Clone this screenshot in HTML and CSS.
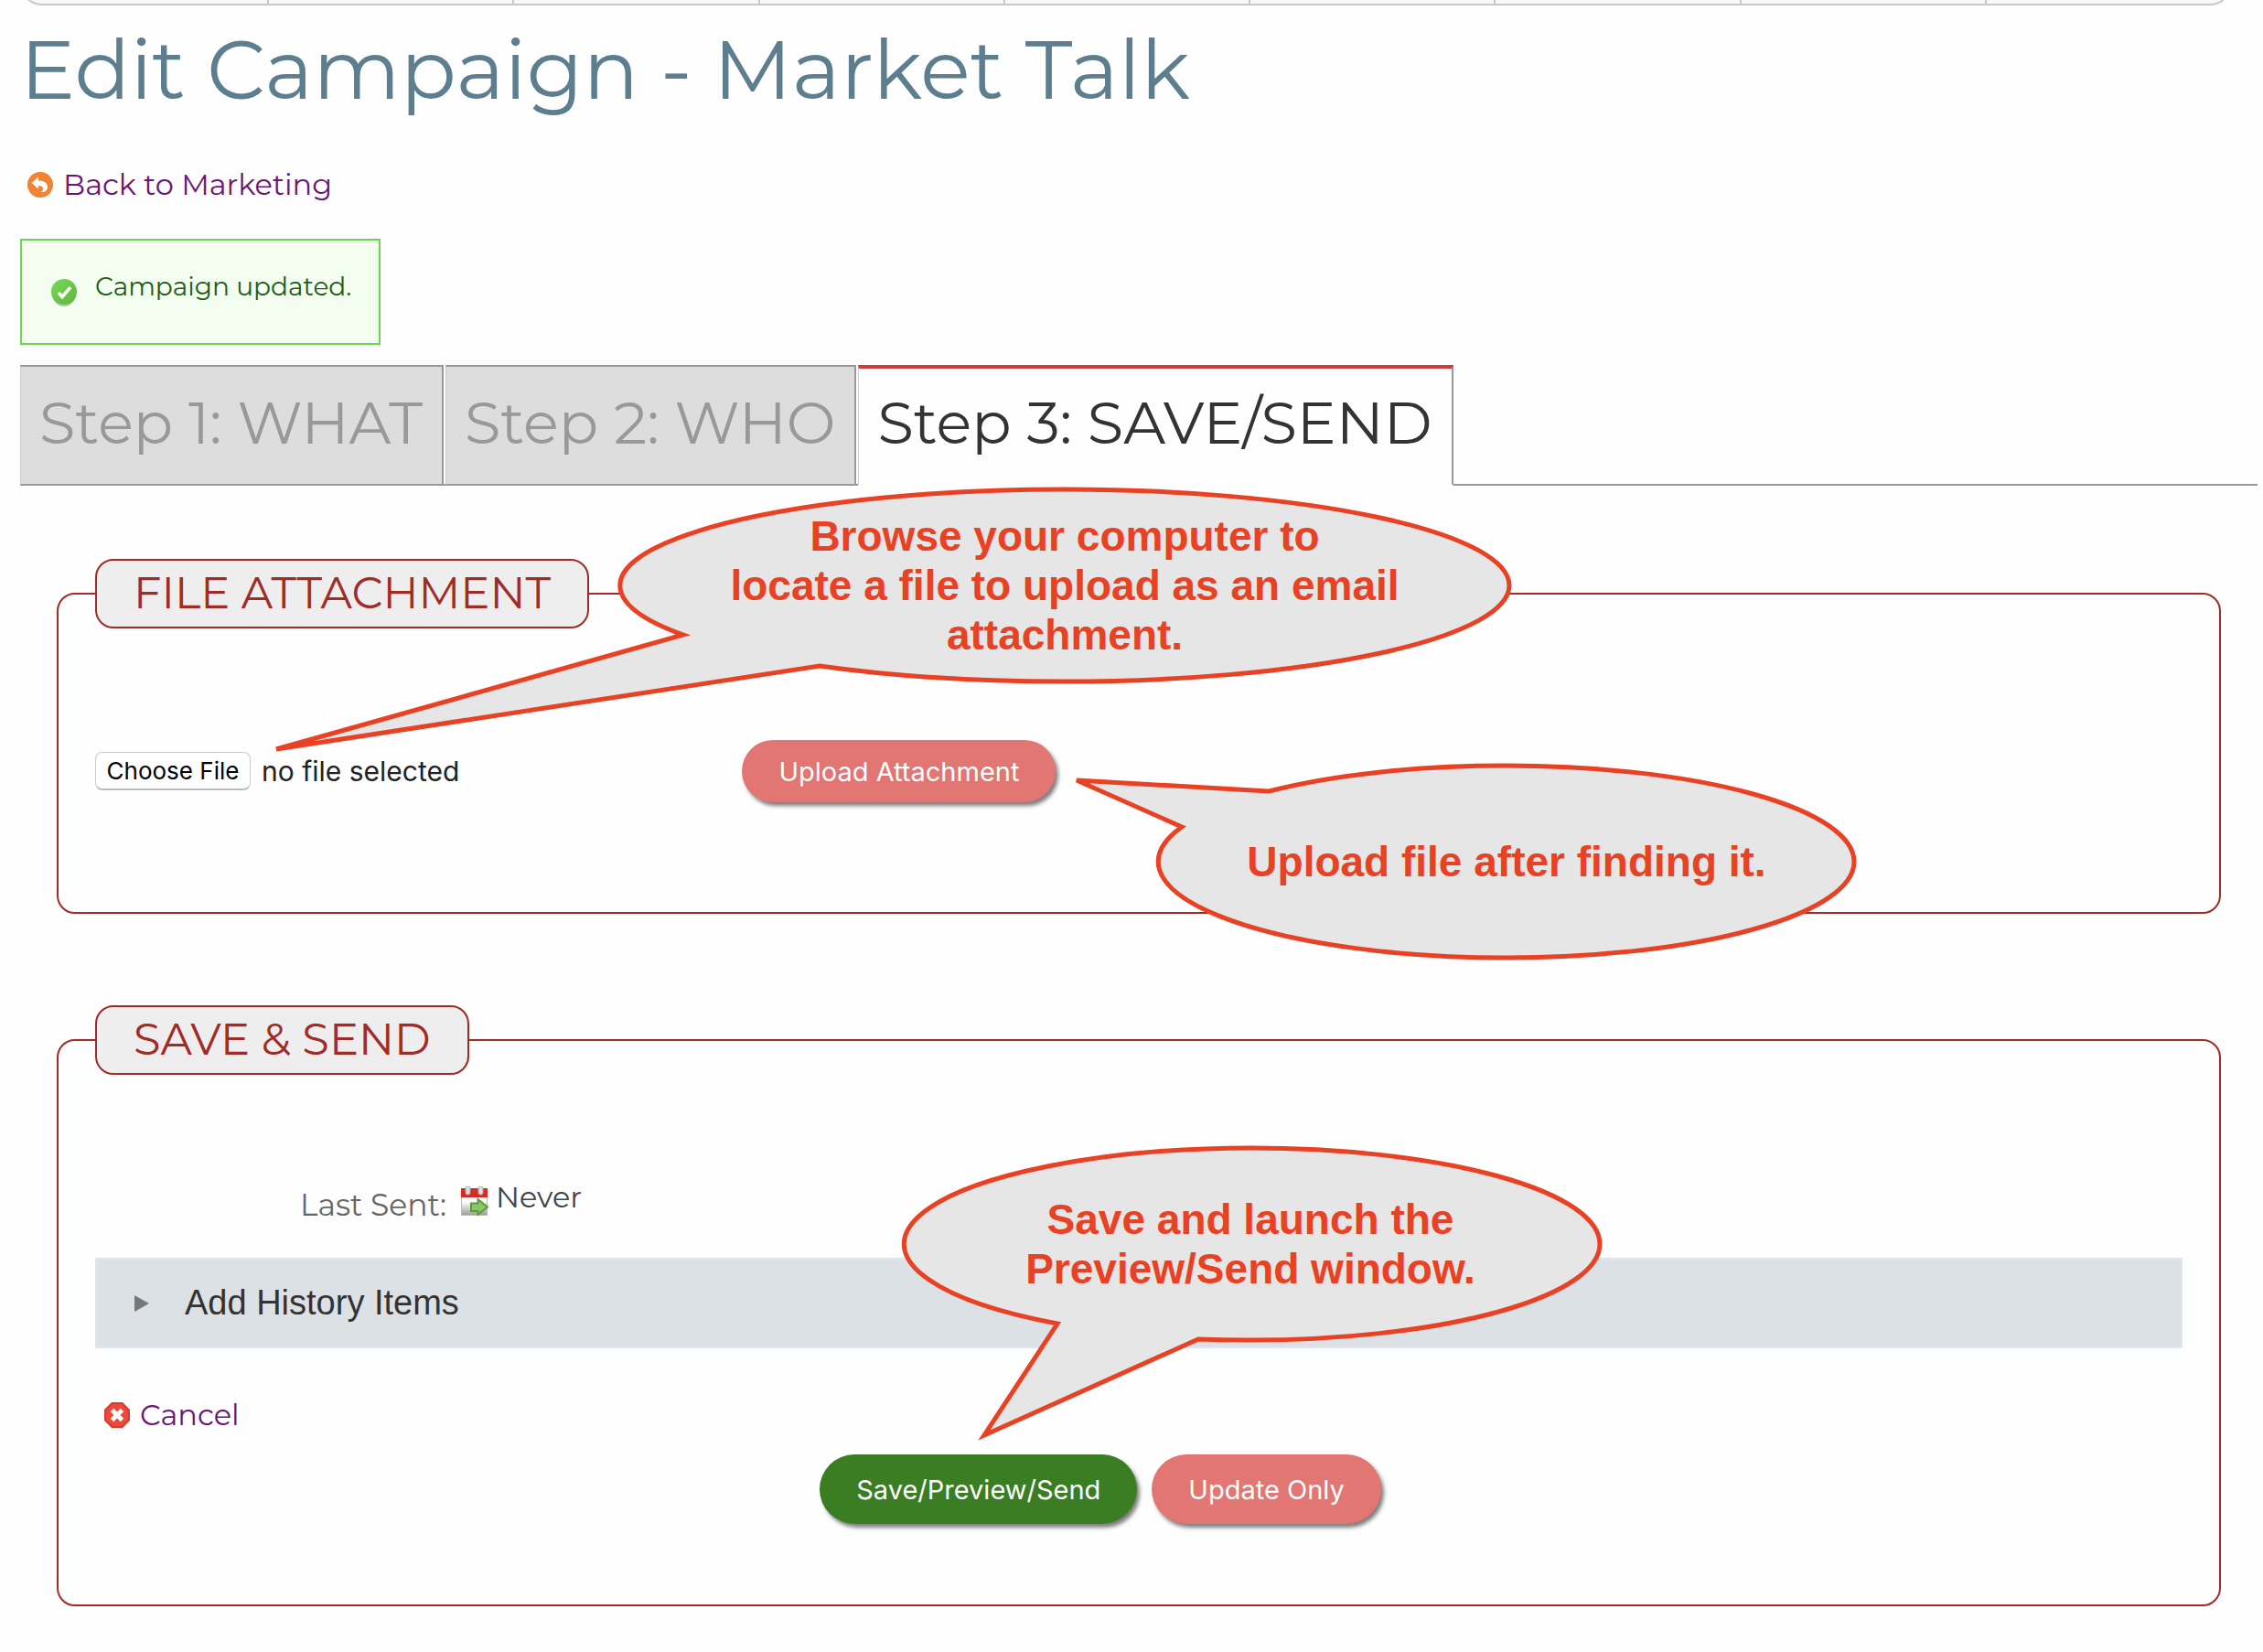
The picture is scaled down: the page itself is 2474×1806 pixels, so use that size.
FILE: index.html
```html
<!DOCTYPE html>
<html lang="en">
<head>
    <meta charset="utf-8">
    <title>Edit Campaign - Market Talk</title>
    <link rel="stylesheet" href="styles.css">
</head>
<body>
    <div class="page">
        <div class="top-nav">
            <div class="top-nav-items">
                <span></span><span></span><span></span><span></span><span></span><span></span><span></span><span></span><span></span>
            </div>
        </div>

        <h1>Edit Campaign - Market Talk</h1>

        <a class="icon-link back-link" href="#">
            <svg class="icon" viewBox="0 0 28 28" aria-hidden="true">
                <circle cx="14" cy="14" r="14" fill="#ee8434"/>
                <path d="M4.500 12 L12 5.500 V9.500 C18 9.500 22 12 22 16.500 C22 20 19 22.500 14.500 22 C18 20.500 18.500 15 12 15 V18.500 Z" fill="#fff"/>
            </svg>
            Back to Marketing
        </a>

        <div class="alert">
            <svg class="icon" viewBox="0 0 28 30" aria-hidden="true">
                <defs>
                    <linearGradient id="ok" x1="0" y1="0" x2="1" y2="1">
                        <stop offset="0" stop-color="#74dc56"/>
                        <stop offset="1" stop-color="#5fb53c"/>
                    </linearGradient>
                </defs>
                <ellipse cx="14" cy="16" rx="13" ry="14" fill="#8c9a86" opacity="0.6"/>
                <circle cx="14" cy="14" r="14" fill="url(#ok)"/>
                <path d="M8 15 L12 19.500 L21 9" fill="none" stroke="#fff" stroke-width="3.500"/>
            </svg>
            <span>Campaign updated.</span>
        </div>

        <div class="tabs">
            <a class="tab" href="#">Step 1: WHAT</a>
            <a class="tab" href="#">Step 2: WHO</a>
            <a class="tab active" href="#">Step 3: SAVE/SEND</a>
        </div>

        <form class="panel">
            <fieldset>
                <legend>FILE ATTACHMENT</legend>
                <div class="upload-row">
                    <div class="file-picker">
                        <input type="file" id="attachment">
                        <label for="attachment">no file selected</label>
                    </div>
                    <div>
                        <button type="button" class="btn btn-small">Upload Attachment</button>
                    </div>
                </div>
            </fieldset>

            <fieldset class="save-send">
                <legend>SAVE &amp; SEND</legend>
                <div class="last-sent">
                    <span class="field-label">Last Sent:</span>
                    <svg class="calendar" viewBox="0 0 30 32" aria-hidden="true">
                        <defs>
                            <linearGradient id="sheet" x1="0" y1="0" x2="0" y2="1">
                                <stop offset="0.500" stop-color="#fdfdfd"/>
                                <stop offset="1" stop-color="#9a9a9a"/>
                            </linearGradient>
                        </defs>
                        <rect x="0.500" y="3" width="28" height="28.500" fill="url(#sheet)" stroke="#bbb"/>
                        <rect x="0" y="2" width="29" height="10" fill="#d42b22"/>
                        <rect x="5" y="0" width="5" height="9" rx="2" fill="#ddd" stroke="#a9a9a9"/>
                        <rect x="19" y="0" width="5" height="9" rx="2" fill="#ddd" stroke="#a9a9a9"/>
                        <path d="M11 18.500 H18.500 V14 L29 22.500 L18.500 31 V27 H11 Z" fill="#8cc468" stroke="#5c9c3c" stroke-width="2"/>
                    </svg>
                    <span class="sent-value">Never</span>
                </div>

                <details class="history">
                    <summary>
                        <svg class="arrow" viewBox="0 0 16 18" aria-hidden="true"><path d="M0 0 L16 9 L0 18 Z" fill="#777"/></svg>
                        Add History Items
                    </summary>
                </details>

                <a class="icon-link cancel-link" href="#">
                    <svg class="icon" viewBox="0 0 28 28" aria-hidden="true">
                        <path d="M8 0 H20 L28 8 V20 L20 28 H8 L0 20 V8 Z" fill="#dc3a2c"/>
                        <path d="M9 2 H19 L26 9 V19 L19 26 H9 L2 19 V9 Z" fill="#ea4a3a"/>
                        <path d="M8.500 8.500 L19.500 19.500 M19.500 8.500 L8.500 19.500" stroke="#fff" stroke-width="5"/>
                    </svg>
                    Cancel
                </a>

                <div class="actions">
                    <button type="button" class="btn btn-green">Save/Preview/Send</button>
                    <button type="button" class="btn">Update Only</button>
                </div>
            </fieldset>
        </form>

        <!-- help bubbles -->
        <div class="callout callout-browse">
            <svg viewBox="0 0 976 216" aria-hidden="true">
                <path d="M71 162 A486 105 0 0 1 488 3 A486 105 0 0 1 974 108 A486 105 0 0 1 488 213 A486 105 0 0 1 220 196 L-374 287 Z"/>
            </svg>
            <p>Browse your computer to<br>locate a file to upload as an email<br>attachment.</p>
        </div>
        <div class="callout callout-upload">
            <svg viewBox="0 0 766 216" aria-hidden="true">
                <path d="M123 31 A380 105 0 0 1 383 3 A380 105 0 0 1 763 108 A380 105 0 0 1 383 213 A380 105 0 0 1 28 70 L-87 19 Z"/>
            </svg>
            <p>Upload file after finding it.</p>
        </div>
        <div class="callout callout-save">
            <svg viewBox="0 0 766 216" aria-hidden="true">
                <path d="M172 195 A381 105 0 0 1 384 3 A381 105 0 0 1 765 108 A381 105 0 0 1 384 213 A381 105 0 0 1 326 212 L92 317 Z"/>
            </svg>
            <p>Save and launch the<br>Preview/Send window.</p>
        </div>
    </div>
</body>
</html>
```
FILE: styles.css
```css
* {
    box-sizing: border-box;
}
body {
    margin: 0;
    background-color: #fefefe;
    color: #333;
    font-family: Montserrat, Inter, sans-serif;
}
.page {
    position: relative;
    padding: 0 6px 50px 22px;
}

/* only the bottom edge of the menu bar shows */
.top-nav {
    display: flex;
    align-items: flex-end;
    height: 6px;
    margin-right: 28px;
    overflow: hidden;
}
.top-nav-items {
    flex: 1;
    display: grid;
    grid-template-columns: repeat(9, 1fr);
    height: 60px;
    background-color: #f8f8f8;
    border: 2px solid #c8c8c8;
    border-radius: 24px;
}
.top-nav-items span + span {
    border-left: 2px solid #c8c8c8;
}

h1 {
    margin: 10px 0 45px;
    color: #5d7e8f;
    font-size: 90px;
    font-weight: 400;
    line-height: 120px;
}

.icon {
    flex: none;
    width: 28px;
}
.icon-link {
    display: flex;
    align-items: center;
    gap: 11px;
    width: fit-content;
    color: #6c1577;
    font-size: 32px;
    line-height: 42px;
    text-decoration: none;
}
.back-link {
    margin-left: 8px;
}
.cancel-link {
    margin: 52px 0 22px 10px;
}

.alert {
    display: flex;
    align-items: flex-end;
    gap: 20px;
    width: fit-content;
    margin: 38px 0 22px;
    padding: 32px 30px 40px 32px;
    background-color: #f3fdf0;
    border: 2px solid #6cd74c;
    color: #225c14;
    font-size: 28px;
    line-height: 36px;
}
.alert span {
    padding-bottom: 4px;
}

.tabs {
    display: flex;
    gap: 2px;
    border-bottom: 2px solid #999;
}
.tab {
    margin-bottom: -2px;
    padding: 21px 21px 27px 20px;
    background-color: #ddd;
    border: 2px solid #999;
    border-left: 1px solid #ccc;
    color: #999;
    font-size: 64px;
    line-height: 80px;
    text-decoration: none;
}
.tab.active {
    padding-top: 19px;
    background-color: #fefefe;
    border-top: 4px solid #d33c3c;
    border-bottom-color: #fefefe;
    color: #333;
}

.panel {
    padding: 80px 40px 0;
}
fieldset {
    margin: 0;
    padding: 122px 40px 120px;
    border: 2px solid #a12c27;
    border-radius: 20px;
}
legend {
    padding: 0 40px 2px;
    background-color: #eee;
    border: 2px solid #a12c27;
    border-radius: 20px;
    color: #a12c27;
    font-size: 48px;
    line-height: 70px;
}
.save-send {
    margin-top: 100px;
    padding-top: 114px;
    padding-bottom: 88px;
}

.upload-row {
    display: grid;
    grid-template-columns: 31% 1fr;
    align-items: center;
}
.file-picker {
    display: flex;
    align-items: center;
    gap: 12px;
    color: #222;
    font-family: Inter, sans-serif;
    font-size: 30px;
}
.file-picker input {
    width: 170px;
    color: transparent;
    font-size: 0;
}
.file-picker input::file-selector-button {
    width: 170px;
    height: 42px;
    margin: 0;
    padding: 0;
    background-color: #fff;
    border: 1px solid #ccc;
    border-bottom: 2px solid #bbb;
    border-radius: 8px;
    color: #000;
    font-family: Inter, sans-serif;
    font-size: 26px;
}

.btn {
    height: 76px;
    padding: 0 40px;
    background-color: #e17673;
    border: 0;
    border-radius: 38px;
    box-shadow: 3px 4px 4px rgba(0, 0, 0, 0.5);
    color: #fff;
    font-family: Inter, sans-serif;
    font-size: 29px;
}
.btn-small {
    height: 68px;
}
.btn-green {
    background-color: #3b7d23;
}

.last-sent {
    display: flex;
    align-items: flex-start;
    margin-bottom: 38px;
    line-height: 40px;
}
.field-label {
    width: 384px;
    padding-top: 8px;
    color: #666;
    font-size: 33px;
    text-align: right;
}
.calendar {
    width: 30px;
    margin: 8px 8px 0 16px;
}
.sent-value {
    color: #444;
    font-size: 32px;
}

.history summary {
    display: flex;
    align-items: center;
    gap: 39px;
    height: 99px;
    padding: 0 41px;
    background-color: #dce1e5;
    border: 2px solid #dde5f3;
    font-family: "Liberation Sans", Arial, sans-serif;
    font-size: 38px;
}
.arrow {
    width: 16px;
}

.actions {
    display: flex;
    justify-content: center;
    gap: 16px;
    padding-right: 84px;
}

.callout {
    position: absolute;
    display: flex;
    align-items: center;
    justify-content: center;
    width: 766px;
    height: 216px;
    color: #e84124;
    font-family: "Liberation Sans", Arial, sans-serif;
    font-size: 46px;
    font-weight: bold;
    line-height: 54px;
    text-align: center;
}
.callout svg {
    position: absolute;
    inset: 0;
    overflow: visible;
    fill: #e6e6e6;
    stroke: #e84124;
    stroke-width: 5;
}
.callout p {
    position: relative;
    margin: 0;
}
.callout-browse {
    top: 532px;
    left: 676px;
    width: 976px;
}
.callout-upload {
    top: 834px;
    left: 1264px;
}
.callout-save {
    top: 1252px;
    left: 984px;
}
```
